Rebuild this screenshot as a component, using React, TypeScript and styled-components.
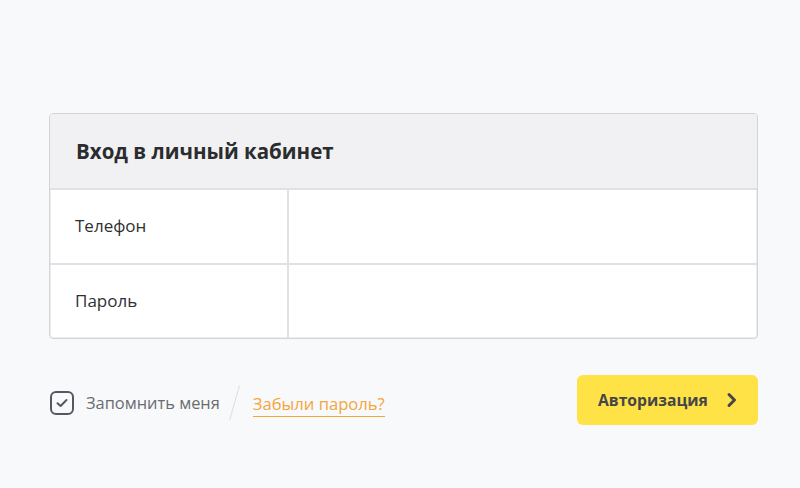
import React from "react";
import styled, { createGlobalStyle } from "styled-components";

const Global = createGlobalStyle`
  html, body { margin: 0; padding: 0; background: #f8f9fa; }
  body { font-family: "Open Sans", Roboto, Arial, sans-serif; }
  * { box-sizing: border-box; }
`;

const Page = styled.div`
  width: 800px;
  height: 488px;
  padding: 113px 42px 0 49px;
`;

const Card = styled.div`
  width: 709px;
  background: #fff;
  border: 1px solid #d3d4d8;
  border-radius: 4px;
  overflow: hidden;
  box-shadow: inset 0 0 0 1px #eceef0;
`;

const Header = styled.div`
  height: 76px;
  background: #f1f1f3;
  border-bottom: 2px solid #e0e1e4;
  display: flex;
  align-items: center;
  padding-left: 26px;
  padding-bottom: 1px;
  font-size: 20.5px;
  font-weight: 700;
  color: #2b2c2e;
`;

const Row = styled.div<{ $last?: boolean }>`
  display: grid;
  grid-template-columns: 239px 1fr;
  height: ${(p) => (p.$last ? "73px" : "75px")};
  border-bottom: ${(p) => (p.$last ? "none" : "2px solid #e0e1e4")};
`;

const Label = styled.div`
  display: flex;
  align-items: center;
  padding-left: 25px;
  padding-bottom: 2px;
  font-size: 17px;
  color: #2f3033;
  border-right: 2px solid #e0e1e4;
`;

const Input = styled.input`
  border: none;
  outline: none;
  background: transparent;
  font-size: 16px;
  padding: 0 20px;
`;

const Footer = styled.div`
  display: flex;
  align-items: center;
  justify-content: space-between;
  margin-top: 36px;
  width: 709px;
`;

const Left = styled.div`
  display: flex;
  align-items: center;
  padding-top: 5px;
`;

const Check = styled.span`
  width: 24px;
  height: 24px;
  border: 2px solid #55585e;
  border-radius: 6px;
  display: flex;
  align-items: center;
  justify-content: center;
  margin-left: 1px;
`;

const CheckText = styled.span`
  margin-left: 12px;
  font-size: 16.4px;
  color: #6a6c70;
`;

const Slash = styled.span`
  width: 1px;
  height: 36px;
  background: #dcdde0;
  transform: rotate(16deg);
  margin: 0 18px 0 14px;
`;

const Forgot = styled.a`
  font-size: 16.6px;
  color: #f5a53f;
  text-decoration: none;
  border-bottom: 1px solid #f5a53f;
  padding-bottom: 1px;
  margin-top: 4px;
`;

const Button = styled.button`
  width: 181px;
  height: 50px;
  border: none;
  border-radius: 6px;
  background: #fee246;
  color: #45464a;
  font-family: inherit;
  font-size: 15.7px;
  font-weight: 700;
  display: flex;
  align-items: center;
  padding: 0 20px 0 21px;
  justify-content: space-between;
  cursor: pointer;
`;

export default function App() {
  return (
    <>
      <Global />
      <Page>
        <Card>
          <Header>Вход в личный кабинет</Header>
          <Row>
            <Label>Телефон</Label>
            <Input type="tel" />
          </Row>
          <Row $last>
            <Label>Пароль</Label>
            <Input type="password" />
          </Row>
        </Card>
        <Footer>
          <Left>
            <Check>
              <svg width="14" height="12" viewBox="0 0 14 12">
                <path d="M2.5 6.2 L5.6 9 L11.5 3" fill="none" stroke="#55585e" strokeWidth="2" strokeLinecap="round" strokeLinejoin="round" />
              </svg>
            </Check>
            <CheckText>Запомнить меня</CheckText>
            <Slash />
            <Forgot href="#">Забыли пароль?</Forgot>
          </Left>
          <Button>
            <span>Авторизация</span>
            <svg width="12" height="16" viewBox="0 0 12 16">
              <path d="M3 2.5 L8.5 8 L3 13.5" fill="none" stroke="#45464a" strokeWidth="3" strokeLinecap="round" strokeLinejoin="round" />
            </svg>
          </Button>
        </Footer>
      </Page>
    </>
  );
}
